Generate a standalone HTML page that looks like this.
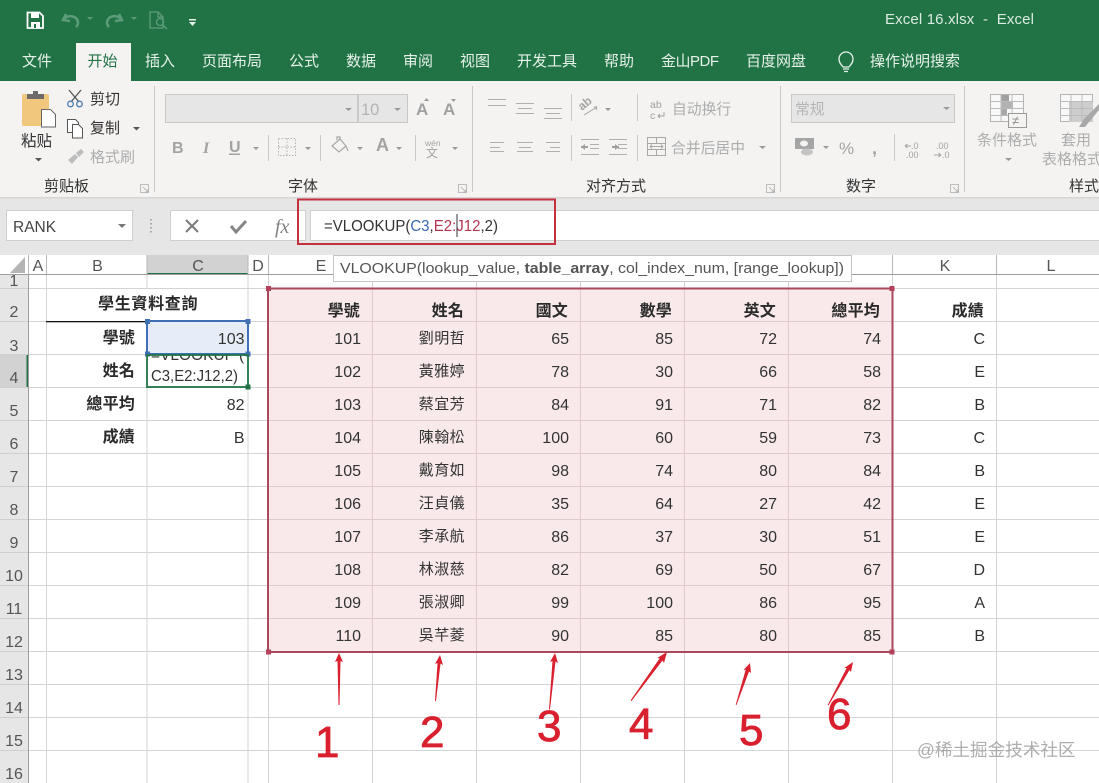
<!DOCTYPE html>
<html><head><meta charset="utf-8"><style>
html,body{margin:0;padding:0;background:#fff;width:1099px;height:783px;overflow:hidden}
svg{display:block}
text{font-family:"Liberation Sans","Noto Sans CJK SC",sans-serif}
.tc text,text.tc{font-family:"Liberation Sans","Noto Sans CJK TC",sans-serif}
.tab{font-size:15px;fill:#e6f1ea}
.g{font-size:14.5px;fill:#adadad}
.k{font-size:15px;fill:#333}
.h{font-size:16px;fill:#555;text-anchor:middle}
.n{font-size:16px;fill:#333;text-anchor:end}
.b{font-size:16px;fill:#2a2a2a;text-anchor:end;font-weight:700;letter-spacing:.2px}
.m{font-size:15px;fill:#333;text-anchor:end;letter-spacing:.4px}
.r{font-size:44px;fill:#d9202e;stroke:#d9202e;stroke-width:.8px}
.ar{fill:none;stroke:#adadad}
.sep{stroke:#c9c9c9;stroke-width:1}
.tri{fill:#9a9a9a}
</style></head><body>
<svg width="1099" height="783" viewBox="0 0 1099 783" xmlns="http://www.w3.org/2000/svg">
<rect width="1099" height="783" fill="#fff"/>
<!-- title bar -->
<rect width="1099" height="81" fill="#217346"/>
<path d="M27.500 12.500h12l3.500 3.500v12h-15.500z" fill="none" stroke="#fff" stroke-width="1.800"/>
<rect x="31" y="13" width="8" height="5" fill="#fff"/><rect x="31" y="22" width="9" height="6" fill="#fff"/><rect x="34" y="24" width="2" height="4" fill="#217346"/>
<g fill="none" stroke="#5d9c7b" stroke-width="2.500"><path d="M64 19c5-5 14-3 14 4 0 2-1 3-2 4"/><path d="M66 14l-3 6 7 1"/><path d="M121 19c-5-5-14-3-14 4 0 2 1 3 2 4"/><path d="M119 14l3 6-7 1"/></g>
<path d="M87 17l6 0-3 3zM131 17l6 0-3 3z" fill="#5d9c7b"/>
<g fill="none" stroke="#5d9c7b" stroke-width="1.300"><path d="M150 12h8l5 5v11h-13zM158 12v5h5"/><circle cx="160" cy="22" r="3.500"/><path d="M163 25l4 4"/></g>
<path d="M189 19h7v1.500h-7zM189 22h7l-3.500 4z" fill="#e6f1ea"/>
<text x="885" y="24" style="font-size:15px;fill:#dcebe2" textLength="149">Excel 16.xlsx&#160; -&#160; Excel</text>
<!-- tabs -->
<rect x="76" y="43" width="55" height="38" fill="#f4f3f2"/>
<text class="tab" x="22" y="66">文件</text>
<text class="tab" x="87.500" y="66" style="fill:#217346">开始</text>
<text class="tab" x="145" y="66">插入</text>
<text class="tab" x="202" y="66">页面布局</text>
<text class="tab" x="289" y="66">公式</text>
<text class="tab" x="346" y="66">数据</text>
<text class="tab" x="403" y="66">审阅</text>
<text class="tab" x="460" y="66">视图</text>
<text class="tab" x="517" y="66">开发工具</text>
<text class="tab" x="604" y="66">帮助</text>
<text class="tab" x="661" y="66" textLength="58">金山PDF</text>
<text class="tab" x="746" y="66">百度网盘</text>
<path d="M843 67c-2-3-4-4-4-8a7 7 0 0 1 14 0c0 4-2 5-4 8zM843 69h6M844 71.500h4" fill="none" stroke="#e6f1ea" stroke-width="1.300"/>
<text class="tab" x="870" y="66">操作说明搜索</text>
<!-- ribbon -->
<rect y="81" width="1099" height="116" fill="#f4f3f2"/>
<rect y="197" width="1099" height="58" fill="#e6e6e6"/>
<rect y="197" width="1099" height="1.500" fill="#d6d6d6"/>
<g class="sep"><path d="M154.500 86v106M472.500 86v106M780.500 86v106M964.500 86v106"/>
<path d="M268.500 135v26M320.500 135v26M415.500 135v26M571.500 94v27M571.500 135v26M637.500 94v27M637.500 135v26M894.500 134v27"/></g>
<!-- clipboard -->
<rect x="22" y="94" width="27" height="32" rx="2" fill="#f0c77c"/>
<path d="M27 99v-5h6v-3h5v3h6v5z" fill="#6f6a6a"/>
<path d="M41.500 109.500h9l5 5v12.500h-14z" fill="#fff" stroke="#666"/>
<text class="k" x="21" y="146" style="font-size:15.500px">粘贴</text>
<path d="M35 158h7l-3.500 3.500z" fill="#555"/>
<g fill="none" stroke="#555" stroke-width="1.300"><path d="M69 90l10 12M81 90l-10 12"/></g>
<g fill="none" stroke="#4f7fb8" stroke-width="1.300"><circle cx="70.500" cy="104" r="2.800"/><circle cx="79.500" cy="104" r="2.800"/></g>
<text class="k" x="90" y="104">剪切</text>
<g fill="#fff" stroke="#555"><path d="M67.500 119.500h8l3 3v10h-11z"/><path d="M72.500 124.500h6l4 4v9.500h-10z"/></g>
<text class="k" x="90" y="133">复制</text>
<path d="M133 127h7l-3.500 3.500z" fill="#555"/>
<path d="M68 160l7-6 3 3-6 7zM76 153l5-4 3 3-5 5z" fill="#bdbdbd"/>
<text class="g" x="90" y="162" style="font-size:15px">格式刷</text>
<text class="k" x="44" y="191">剪贴板</text>
<path class="ar" d="M140.500 184.500h8v8h-8zM143 187l5 5M148 189v3h-3" stroke-width=".8"/>
<!-- font -->
<rect x="165.500" y="94.500" width="192" height="28" fill="#e6e6e6" stroke="#c8c8c8"/>
<rect x="358.500" y="94.500" width="49" height="28" fill="#e6e6e6" stroke="#c8c8c8"/>
<text x="361" y="115" style="font-size:16.500px;fill:#b3b3b3">10</text>
<path class="tri" d="M345 108h7l-3.500 3zM394 108h7l-3.500 3z"/>
<text x="416" y="115" style="font-size:17px;fill:#a0a0a0;font-weight:700">A</text><path class="tri" d="M424 101h5l-2.500-3z"/>
<text x="443" y="115" style="font-size:17px;fill:#a0a0a0;font-weight:700">A</text><path class="tri" d="M451 99h5l-2.500 3z"/>
<text x="172" y="153" style="font-size:16px;fill:#a3a3a3;font-weight:700">B</text>
<text x="203" y="153" style="font-size:16px;fill:#a3a3a3;font-style:italic;font-weight:700;font-family:'Liberation Serif',serif">I</text>
<text x="229" y="152" style="font-size:16px;fill:#a3a3a3;font-weight:700">U</text><rect x="229" y="153.500" width="11" height="1.500" fill="#a3a3a3"/>
<path class="tri" d="M253 147h6l-3 3zM305 147h6l-3 3zM357 147h6l-3 3zM396 147h6l-3 3zM452 147h6l-3 3z"/>
<path d="M278.500 138.500h17v17h-17zM287 138.500v17M278.500 147h17" fill="none" stroke="#b5b5b5" stroke-dasharray="1.500 1.500"/>
<path d="M332 146l8-7 6 7-7 6zM337 140v-3l3 0v3M346 146l2 5" fill="none" stroke="#a8a8a8" stroke-width="1.200"/>
<text x="376" y="151" style="font-size:18px;fill:#a3a3a3;font-weight:700">A</text>
<text x="425" y="146" style="font-size:8.500px;fill:#a3a3a3">wén</text>
<text x="426" y="157" style="font-size:12px;fill:#a3a3a3">文</text>
<text class="k" x="288" y="191">字体</text>
<path class="ar" d="M458.500 184.500h8v8h-8zM461 187l5 5M466 189v3h-3" stroke-width=".8"/>
<!-- alignment -->
<g fill="none" stroke="#b0b0b0" stroke-width="1"><path d="M488 99.500h18M488 105.500h18M516 103.500h18M518 108.500h14M516 113.500h18M544 108.500h18M546 113.500h14M544 118.500h18"/>
<path d="M490 142.500h14M490 147.500h10M490 151.500h14M517 142.500h16M519 147.500h12M517 151.500h16M546 142.500h14M550 147.500h10M546 151.500h14"/>
<path d="M581 139.500h18M590 144.500h9M590 148.500h9M581 154.500h18M609 139.500h18M618 144.500h9M618 148.500h9M609 154.500h18"/></g>
<path d="M581 147h7M619 147h-7" stroke="#a0a0a0" stroke-width="2"/><path d="M581 147l4-3v6zM619 147l-4-3v6z" fill="#a0a0a0"/>
<text transform="translate(582 111) rotate(-40)" style="font-size:12px;fill:#a3a3a3;font-weight:700">ab</text>
<path d="M584 115l13-8M597 107l-3 0M597 107l-1 3" stroke="#a3a3a3" fill="none"/>
<path class="tri" d="M605 108h6l-3 3zM759 146h7l-3.500 3z"/>
<text x="650" y="108" style="font-size:10.500px;fill:#a0a0a0">ab</text>
<text x="650" y="119" style="font-size:10.500px;fill:#a0a0a0">c</text>
<path d="M664 112v4h-6M658 116l2-2M658 116l2 2" fill="none" stroke="#a0a0a0"/>
<text class="g" x="672" y="114" style="font-size:14.800px">自动换行</text>
<path d="M647.500 137.500h18v18h-18zM647.500 143.500h18M647.500 149.500h18M656.500 137.500v6M656.500 149.500v6M650 146.500h13M650 146.500l2-2M650 146.500l2 2M663 146.500l-2-2M663 146.500l-2 2" fill="#f4f3f2" stroke="#a8a8a8"/>
<text class="g" x="671" y="153" style="font-size:14.800px">合并后居中</text>
<text class="k" x="586" y="191">对齐方式</text>
<path class="ar" d="M766.500 184.500h8v8h-8zM769 187l5 5M774 189v3h-3" stroke-width=".8"/>
<!-- number -->
<rect x="791.500" y="94.500" width="163" height="28" fill="#e6e6e6" stroke="#c8c8c8"/>
<text class="g" x="795" y="114" style="font-size:14.800px;fill:#b5b5b5">常规</text>
<path class="tri" d="M943 107h7l-3.500 3z"/>
<rect x="795" y="138" width="19" height="11" fill="#a5a5a5"/><ellipse cx="804" cy="143.500" rx="4" ry="3" fill="#f4f3f2"/><ellipse cx="807" cy="152" rx="6" ry="3.500" fill="#c4c4c4"/>
<path class="tri" d="M823 146h6l-3 3z"/>
<text x="839" y="154" style="font-size:17px;fill:#a3a3a3">%</text>
<text x="872" y="154" style="font-size:18px;fill:#a3a3a3;font-weight:700">,</text>
<text x="911" y="149" style="font-size:9px;fill:#a3a3a3">.0</text><text x="906" y="158" style="font-size:9px;fill:#a3a3a3">.00</text>
<path d="M905 146h6M905 146l2.500-2M905 146l2.500 2" stroke="#a3a3a3" fill="none"/>
<text x="936" y="149" style="font-size:9px;fill:#a3a3a3">.00</text><text x="942" y="158" style="font-size:9px;fill:#a3a3a3">.0</text>
<path d="M934 155h7M941 155l-2.500-2M941 155l-2.500 2" stroke="#a3a3a3" fill="none"/>
<text class="k" x="846" y="191">数字</text>
<path class="ar" d="M950.500 184.500h8v8h-8zM953 187l5 5M958 189v3h-3" stroke-width=".8"/>
<!-- styles -->
<rect x="990.500" y="94.500" width="33" height="27" fill="#f8f8f8" stroke="#b5b5b5"/>
<rect x="1001" y="95" width="8" height="7" fill="#a0a0a0"/><rect x="1001" y="102" width="12" height="7" fill="#b2b2b2"/><rect x="1001" y="109" width="6" height="6" fill="#a8a8a8"/>
<path d="M990.500 101.500h33M990.500 108.500h33M990.500 115.500h33M1001 94.500v27M1012 94.500v27" stroke="#bcbcbc" fill="none"/>
<rect x="1008.500" y="113.500" width="18" height="14" fill="#f4f3f2" stroke="#9a9a9a"/>
<text x="1012" y="125" style="font-size:13px;fill:#8c8c8c">≠</text>
<text class="g" x="977" y="145" style="font-size:15px">条件格式</text>
<path class="tri" d="M1005 158h7l-3.500 3z"/>
<rect x="1060.500" y="94.500" width="32" height="27" fill="#f8f8f8" stroke="#b5b5b5"/>
<rect x="1069" y="102" width="24" height="20" fill="#cdcdcd"/>
<path d="M1060.500 101.500h32M1060.500 108.500h32M1060.500 115.500h32M1071 94.500v27M1082 94.500v27" stroke="#bcbcbc" fill="none"/>
<path d="M1079 127l5-8 15-15v6l-10 12-4 5z" fill="#a8a8a8"/>
<text class="g" x="1061" y="145" style="font-size:15px">套用</text>
<text class="g" x="1042" y="164" style="font-size:15px">表格格式</text>
<text class="k" x="1069" y="191">样式</text>
<!-- formula bar -->
<rect x="6.500" y="210.500" width="126" height="30" fill="#fff" stroke="#cfcfcf"/>
<text x="13" y="232" style="font-size:15.500px;fill:#444">RANK</text>
<path d="M118 224h8l-4 4z" fill="#777"/>
<path d="M151 219v1.500M151 223v1.500M151 227v1.500M151 231v1.500" stroke="#a8a8a8" stroke-width="2" fill="none"/>
<rect x="170.500" y="210.500" width="135" height="30" fill="#fff" stroke="#cfcfcf"/>
<path d="M186 220l12 12M198 220l-12 12" stroke="#7a7a7a" stroke-width="2" fill="none"/>
<path d="M231 226l5 6 10-11" stroke="#858585" stroke-width="3" fill="none"/>
<text x="275" y="233" style="font-size:20px;fill:#808080;font-style:italic;font-family:'Liberation Serif',serif">fx</text>
<rect x="310.500" y="210.500" width="790" height="30" fill="#fff" stroke="#cfcfcf"/>
<text x="324" y="231" style="font-size:15.500px;fill:#333" textLength="174" lengthAdjust="spacingAndGlyphs">=VLOOKUP(<tspan fill="#3a6ab0">C3</tspan>,<tspan fill="#b4344e">E2:J12</tspan>,2)</text>
<rect x="456.500" y="214" width="1" height="23" fill="#333"/>
<rect x="298" y="199.500" width="257" height="44.500" fill="none" stroke="#c4303d" stroke-width="2"/>
<!-- column headers -->
<rect x="147" y="255" width="101" height="19" fill="#d2d2d2"/>
<rect x="147" y="273" width="101" height="2" fill="#217346"/>
<path d="M25 257v16h-15z" fill="#b4b4b4"/>
<path d="M28.500 255v19M46.500 255v19M147 255v19M248 255v19M268.500 255v19M372.500 255v19M476.500 255v19M580.500 255v19M684.500 255v19M788.500 255v19M892.500 255v19M996.500 255v19" stroke="#b8b8b8" fill="none"/>
<rect y="274" width="1099" height="1" fill="#9e9e9e"/>
<text class="h" x="38" y="271">A</text><text class="h" x="97.500" y="271">B</text><text class="h" x="198" y="271">C</text><text class="h" x="258" y="271">D</text><text class="h" x="321" y="271">E</text>
<text class="h" x="945" y="271">K</text><text class="h" x="1051" y="271">L</text>
<!-- row headers -->
<rect y="275" width="28" height="508" fill="#e6e6e6"/>
<rect y="354" width="28" height="33" fill="#d2d2d2"/>
<rect x="26.500" y="354" width="2" height="33" fill="#217346"/>
<rect x="28" y="275" width="1" height="508" fill="#9e9e9e"/>
<g stroke="#cfcfcf"><path d="M0 288.500h28M0 321.500h28M0 354.500h28M0 387.500h28M0 420.500h28M0 453.500h28M0 486.500h28M0 519.500h28M0 552.500h28M0 585.500h28M0 618.500h28M0 651.500h28M0 684.500h28M0 717.500h28M0 750.500h28"/></g>
<g style="font-size:16px;fill:#555;text-anchor:middle">
<text x="14" y="286">1</text><text x="14" y="317">2</text><text x="14" y="351">3</text><text x="14" y="383">4</text><text x="14" y="416">5</text><text x="14" y="449">6</text><text x="14" y="482">7</text><text x="14" y="515">8</text><text x="14" y="548">9</text><text x="14" y="581">10</text><text x="14" y="614">11</text><text x="14" y="647">12</text><text x="14" y="680">13</text><text x="14" y="713">14</text><text x="14" y="746">15</text><text x="14" y="779">16</text></g>
<rect x="29" y="275" width="1070" height="13" fill="#fff"/>
<!-- grid -->
<g stroke="#d4d4d4" fill="none">
<path d="M29 288.500h1070M29 321.500h1070M29 354.500h1070M29 387.500h1070M29 420.500h1070M29 453.500h1070M29 486.500h1070M29 519.500h1070M29 552.500h1070M29 585.500h1070M29 618.500h1070M29 651.500h1070M29 684.500h1070M29 717.500h1070M29 750.500h1070"/>
<path d="M46.500 275v508M147 275v13M147 321v462M248 275v508M268.500 275v508M372.500 275v508M476.500 275v508M580.500 275v508M684.500 275v508M788.500 275v508M892.500 275v508M996.500 275v508"/></g>
<rect x="47" y="289" width="200.500" height="32" fill="#fff"/>
<rect x="46" y="321" width="102" height="1.300" fill="#111"/>
<!-- pink range -->
<rect x="268" y="288" width="625" height="364" fill="#f9e9ea"/>
<g stroke="#dfcacd" fill="none">
<path d="M268 321.500h625M268 354.500h625M268 387.500h625M268 420.500h625M268 453.500h625M268 486.500h625M268 519.500h625M268 552.500h625M268 585.500h625M268 618.500h625"/>
<path d="M372.500 288v364M476.500 288v364M580.500 288v364M684.500 288v364M788.500 288v364"/></g>
<rect x="268" y="288.500" width="624.500" height="363.500" fill="none" stroke="#a84a5c" stroke-width="2"/>
<path d="M266 286h5v5h-5zM889.500 286h5v5h-5zM266 649.500h5v5h-5zM889.500 649.500h5v5h-5z" fill="#b5405a"/>
<!-- left table -->
<g class="tc">
<text x="98" y="309" style="font-size:16px;font-weight:700;fill:#2a2a2a;letter-spacing:.7px">學生資料查詢</text>
<text class="b" x="135" y="343">學號</text><text class="b" x="135" y="376">姓名</text><text class="b" x="135" y="409">總平均</text><text class="b" x="135" y="442">成績</text>
<rect x="147" y="321" width="101" height="33" fill="#e6edf8" stroke="#3f6fb5" stroke-width="2"/>
<path d="M145 319h5v5h-5zM245.500 319h5v5h-5zM145 351.500h5v5h-5zM245.500 351.500h5v5h-5z" fill="#3f6fb5"/>
<text class="n" x="244.500" y="344">103</text>
<text class="n" x="244.500" y="410">82</text>
<text class="n" x="244.500" y="443">B</text>
</g>
<svg x="147" y="355" width="102" height="33"><text x="4" y="5" style="font-size:15.500px;fill:#333">=VLOOKUP (</text><text x="4" y="26" style="font-size:15.500px;fill:#333" textLength="87" lengthAdjust="spacingAndGlyphs">C3,E2:J12,2)</text></svg>
<rect x="147" y="355" width="101" height="32" fill="none" stroke="#217346" stroke-width="1.800"/>
<rect x="245.500" y="384.500" width="5" height="5" fill="#217346"/>
<!-- main table -->
<g class="tc">
<text class="b" x="360" y="316">學號</text><text class="b" x="464" y="316">姓名</text><text class="b" x="568" y="316">國文</text><text class="b" x="672" y="316">數學</text><text class="b" x="776" y="316">英文</text><text class="b" x="880" y="316">總平均</text><text class="b" x="984" y="316">成績</text>
<g class="n"><text x="361" y="344">101</text><text x="569" y="344">65</text><text x="673" y="344">85</text><text x="777" y="344">72</text><text x="881" y="344">74</text><text x="985" y="344">C</text></g><text class="m" x="465" y="343">劉明哲</text>
<g class="n"><text x="361" y="377">102</text><text x="569" y="377">78</text><text x="673" y="377">30</text><text x="777" y="377">66</text><text x="881" y="377">58</text><text x="985" y="377">E</text></g><text class="m" x="465" y="376">黃雅婷</text>
<g class="n"><text x="361" y="410">103</text><text x="569" y="410">84</text><text x="673" y="410">91</text><text x="777" y="410">71</text><text x="881" y="410">82</text><text x="985" y="410">B</text></g><text class="m" x="465" y="409">蔡宜芳</text>
<g class="n"><text x="361" y="443">104</text><text x="569" y="443">100</text><text x="673" y="443">60</text><text x="777" y="443">59</text><text x="881" y="443">73</text><text x="985" y="443">C</text></g><text class="m" x="465" y="442">陳翰松</text>
<g class="n"><text x="361" y="476">105</text><text x="569" y="476">98</text><text x="673" y="476">74</text><text x="777" y="476">80</text><text x="881" y="476">84</text><text x="985" y="476">B</text></g><text class="m" x="465" y="475">戴育如</text>
<g class="n"><text x="361" y="509">106</text><text x="569" y="509">35</text><text x="673" y="509">64</text><text x="777" y="509">27</text><text x="881" y="509">42</text><text x="985" y="509">E</text></g><text class="m" x="465" y="508">汪貞儀</text>
<g class="n"><text x="361" y="542">107</text><text x="569" y="542">86</text><text x="673" y="542">37</text><text x="777" y="542">30</text><text x="881" y="542">51</text><text x="985" y="542">E</text></g><text class="m" x="465" y="541">李承航</text>
<g class="n"><text x="361" y="575">108</text><text x="569" y="575">82</text><text x="673" y="575">69</text><text x="777" y="575">50</text><text x="881" y="575">67</text><text x="985" y="575">D</text></g><text class="m" x="465" y="574">林淑慈</text>
<g class="n"><text x="361" y="608">109</text><text x="569" y="608">99</text><text x="673" y="608">100</text><text x="777" y="608">86</text><text x="881" y="608">95</text><text x="985" y="608">A</text></g><text class="m" x="465" y="607">張淑卿</text>
<g class="n"><text x="361" y="641">110</text><text x="569" y="641">90</text><text x="673" y="641">85</text><text x="777" y="641">80</text><text x="881" y="641">85</text><text x="985" y="641">B</text></g><text class="m" x="465" y="640">吳芊菱</text>
</g>
<!-- tooltip -->
<rect x="333.500" y="255.500" width="518" height="26" fill="#fff" stroke="#c4c4c4"/>
<text x="340" y="273" style="font-size:14.500px;fill:#555" textLength="504" lengthAdjust="spacingAndGlyphs">VLOOKUP(lookup_value, <tspan font-weight="700">table_array</tspan>, col_index_num, [range_lookup])</text>
<!-- arrows -->
<g fill="#d9202e">
<path d="M339 653l4 9-2.500-1-1 44h-1l-1-44-2.500 1z"/>
<path d="M440 655l3 10-2.500-1.500-4.500 37.500h-1l2.500-38-2.500 1z"/>
<path d="M555 653l3 10-2.500-1.500-5.500 48h-1l3.500-48.500-2.500 1z"/>
<path d="M667 652l-3 11-1.500-2.500-31 40.500-.8-.7 29-42-2.500-.3z"/>
<path d="M750 663l1 10-2-1.500-12.500 33.500-.8-.3 10-35-2.300.5z"/>
<path d="M853 662l-2 10-1.500-2-21 35.500-.8-.5 19-37-2.400 0z"/>
</g>
<text class="r" x="315" y="757">1</text>
<text class="r" x="420" y="747">2</text>
<text class="r" x="537" y="741">3</text>
<text class="r" x="629" y="739">4</text>
<text class="r" x="739" y="745">5</text>
<text class="r" x="827" y="729">6</text>
<text x="917" y="756" style="font-size:17.600px;fill:#a0a0a0;opacity:.85">@稀土掘金技术社区</text>
</svg>
</body></html>
